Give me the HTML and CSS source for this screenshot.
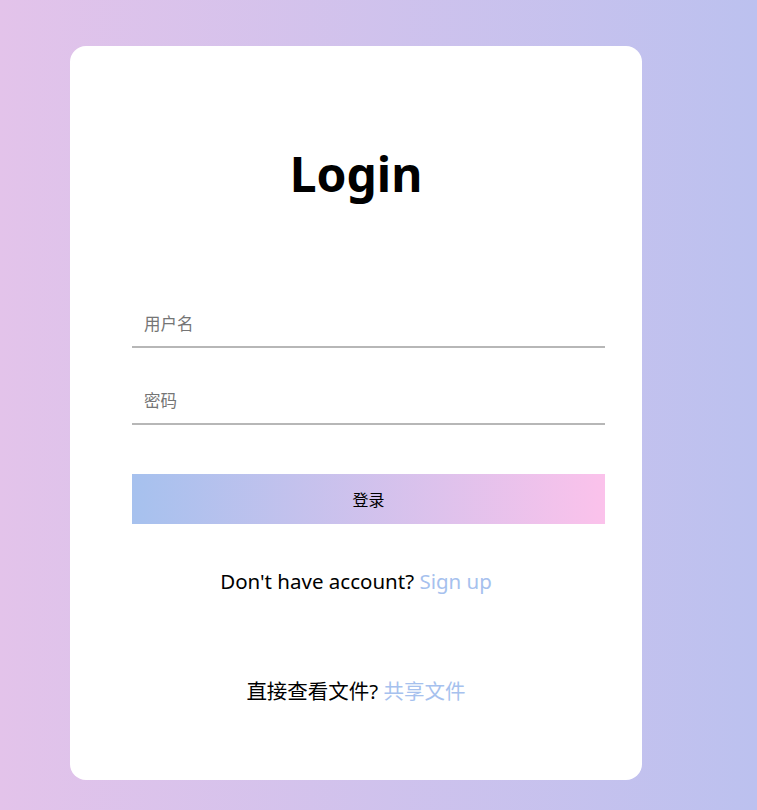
FILE: index.html
```html
<!DOCTYPE html>
<html lang="zh">
<head>
<meta charset="utf-8">
<title>Login</title>
<link rel="stylesheet" href="styles.css">
</head>
<body>
<div class="card">
  <h1 class="title">Login</h1>
  <div class="form">
    <input class="field" type="text" placeholder="用户名">
    <input class="field" type="password" placeholder="密码">
    <button class="btn">登录</button>
  </div>
  <p class="msg">Don't have account? <a class="link" href="#">Sign up</a></p>
  <p class="msg share">直接查看文件? <a class="link" href="#">共享文件</a></p>
</div>
</body>
</html>
```
FILE: styles.css
```css
html, body {
  margin: 0;
  height: 100%;
}
body {
  background: linear-gradient(to right, #e3c3ea, #bcc1ef);
  font-family: "Noto Sans", "Noto Sans CJK SC", sans-serif;
  padding-top: 46px;
  box-sizing: border-box;
  height: 810px;
}
.card {
  margin-left: 70px;
  width: 572px;
  height: 734px;
  background: #fff;
  border-radius: 16px;
  box-sizing: border-box;
  padding-top: 1px;
}
.title {
  margin: 92px 0 0;
  text-align: center;
  font-size: 48px;
  font-weight: 700;
  line-height: 70px;
  color: #000;
}
.form {
  margin: 93px 0 0 62px;
  width: 473px;
  display: flex;
  flex-direction: column;
}
.field {
  box-sizing: border-box;
  border: none;
  border-bottom: 2px solid #b7b7b7;
  outline: none;
  height: 46px;
  padding: 0 12px 3px;
  font-size: 16.5px;
  font-family: "Noto Sans CJK SC", sans-serif;
  margin-bottom: 31px;
  background: transparent;
}
.field::placeholder { color: #757575; }
.field + .field { margin-bottom: 49px; }
.btn {
  height: 50px;
  border: none;
  background: linear-gradient(to right, #a6c1ee, #fbc2eb);
  font-size: 16px;
  font-family: "Noto Sans CJK SC", sans-serif;
  color: #000;
  padding: 0;
}
.msg {
  margin: 42px 0 0;
  text-align: center;
  font-size: 20.5px;
  line-height: 30px;
  color: #000;
}
.share { margin-top: 80px; }
.link {
  color: #a6c1ee;
  text-decoration: none;
}
```
